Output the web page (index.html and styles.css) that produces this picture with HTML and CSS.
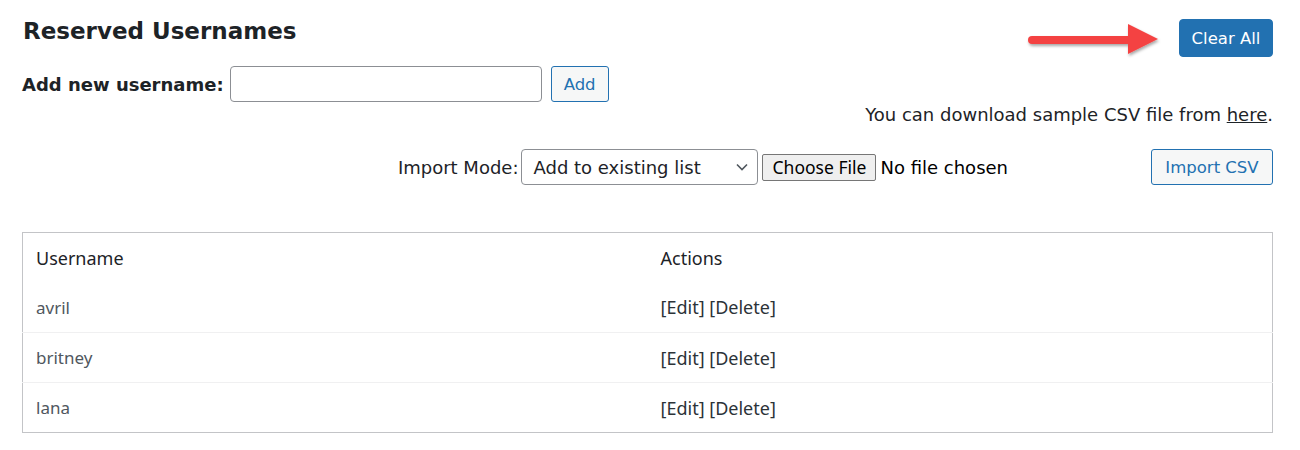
FILE: index.html
```html
<!DOCTYPE html>
<html lang="en">
<head>
<meta charset="utf-8">
<title>Reserved Usernames</title>
<link rel="stylesheet" href="styles.css">
</head>
<body>
<div class="wrap">
  <div class="top">
    <div class="top-left">
      <h2 class="title">Reserved Usernames</h2>
      <form class="add-row">
        <label class="add-label" for="new-user">Add new username:</label>
        <input class="text-input" id="new-user" type="text">
        <button type="button" class="btn btn-secondary btn-add">Add</button>
      </form>
    </div>
    <div class="top-right">
      <svg class="arrow" width="140" height="40" viewBox="0 0 140 40" aria-hidden="true">
        <defs>
          <filter id="sh" x="-10%" y="-30%" width="120%" height="180%">
            <feDropShadow dx="1" dy="2" stdDeviation="1.6" flood-color="#000" flood-opacity="0.35"/>
          </filter>
        </defs>
        <g filter="url(#sh)" fill="#f44242">
          <rect x="4" y="16" width="104" height="8" rx="4"/>
          <polygon points="104,4 134,19 104,34"/>
        </g>
      </svg>
      <button type="button" class="btn btn-primary btn-clear">Clear All</button>
    </div>
  </div>

  <p class="sample">You can download sample CSV file from <a href="#" class="link">here</a>.</p>

  <div class="import-row">
    <div class="import-group">
      <span class="import-label">Import Mode:</span>
      <div class="select">
        <span>Add to existing list</span>
        <svg width="14" height="10" viewBox="0 0 14 10" aria-hidden="true"><path d="M2 2.5 L7 7.5 L12 2.5" fill="none" stroke="#50575e" stroke-width="1.6"/></svg>
      </div>
      <span class="file-btn">Choose File</span>
      <span class="file-status">No file chosen</span>
    </div>
    <button type="button" class="btn btn-secondary btn-import">Import CSV</button>
  </div>

  <table class="list">
    <thead>
      <tr><th>Username</th><th>Actions</th></tr>
    </thead>
    <tbody>
      <tr><td class="name">avril</td><td class="acts">[Edit] [Delete]</td></tr>
      <tr><td class="name">britney</td><td class="acts">[Edit] [Delete]</td></tr>
      <tr><td class="name">lana</td><td class="acts">[Edit] [Delete]</td></tr>
    </tbody>
  </table>
</div>
</body>
</html>
```

FILE: styles.css
```css
* { box-sizing: border-box; }
html, body { margin: 0; background: #fff; }
body {
  font-family: "DejaVu Sans", Verdana, sans-serif;
  font-size: 18px;
  color: #1d2327;
}
.wrap { padding: 0 27px 0 22px; }

.top { display: flex; justify-content: space-between; align-items: flex-start; }
.title {
  margin: 16px 0 0 1px;
  font-size: 23px;
  line-height: 30px;
  font-weight: 700;
}
.add-row { display: flex; align-items: center; margin-top: 20px; }
.add-label { font-weight: 700; font-size: 18px; margin-right: 6px; }
.text-input {
  width: 312px; height: 36px;
  border: 1px solid #8c8f94; border-radius: 4px;
  font: inherit; padding: 0 8px;
}
.btn {
  font: inherit; font-size: 16.5px; border-radius: 3px; cursor: pointer; padding: 0;
  display: inline-flex; align-items: center; justify-content: center;
}
.btn-secondary { background: #f6f7f7; border: 1px solid #2271b1; color: #2271b1; }
.btn-primary { background: #2271b1; border: 1px solid #2271b1; color: #fff; }
.btn-add { width: 58px; height: 36px; margin-left: 9px; }

.top-right { display: flex; align-items: flex-start; margin-top: 19px; }
.arrow { display: block; margin-top: 1px; margin-right: 15px; }
.btn-clear { width: 94px; height: 38px; border-radius: 4px; }

.sample { margin: 1px 0 0; text-align: right; line-height: 24px; }
.link { color: #1d2327; }

.import-row { display: flex; justify-content: flex-end; align-items: center; margin-top: 22px; }
.import-group { display: flex; align-items: center; }
.import-label { margin-right: 3px; }
.select {
  width: 237px; height: 36px;
  border: 1px solid #8c8f94; border-radius: 4px;
  display: flex; align-items: center; justify-content: space-between;
  padding: 0 8px 0 11px;
}
.file-btn {
  margin-left: 4px; height: 27px; width: 114px;
  background: #efefef; border: 1px solid #767676; border-radius: 2px;
  display: inline-flex; align-items: center; justify-content: center;
  color: #000; font-family: "Noto Sans", sans-serif; font-size: 17.5px;
}
.file-status { margin-left: 4px; color: #000; }
.btn-import { width: 122px; height: 36px; margin-left: 143px; }

.list {
  margin-top: 47px;
  width: 100%;
  border-collapse: collapse;
  border: 1px solid #c3c4c7;
  font-family: "Noto Sans", "Open Sans", sans-serif;
  font-size: 18px;
}
.list th, .list td {
  width: 50%; height: 50px; padding: 0 13px;
  text-align: left; font-weight: 400;
}
.list tbody tr { border-top: 1px solid #f0f0f1; }
.list tbody tr:first-child { border-top: none; }
.list th { color: #1d2327; }
.name { color: #50575e; font-size: 17px; }
.acts { color: #2c3338; }
```
